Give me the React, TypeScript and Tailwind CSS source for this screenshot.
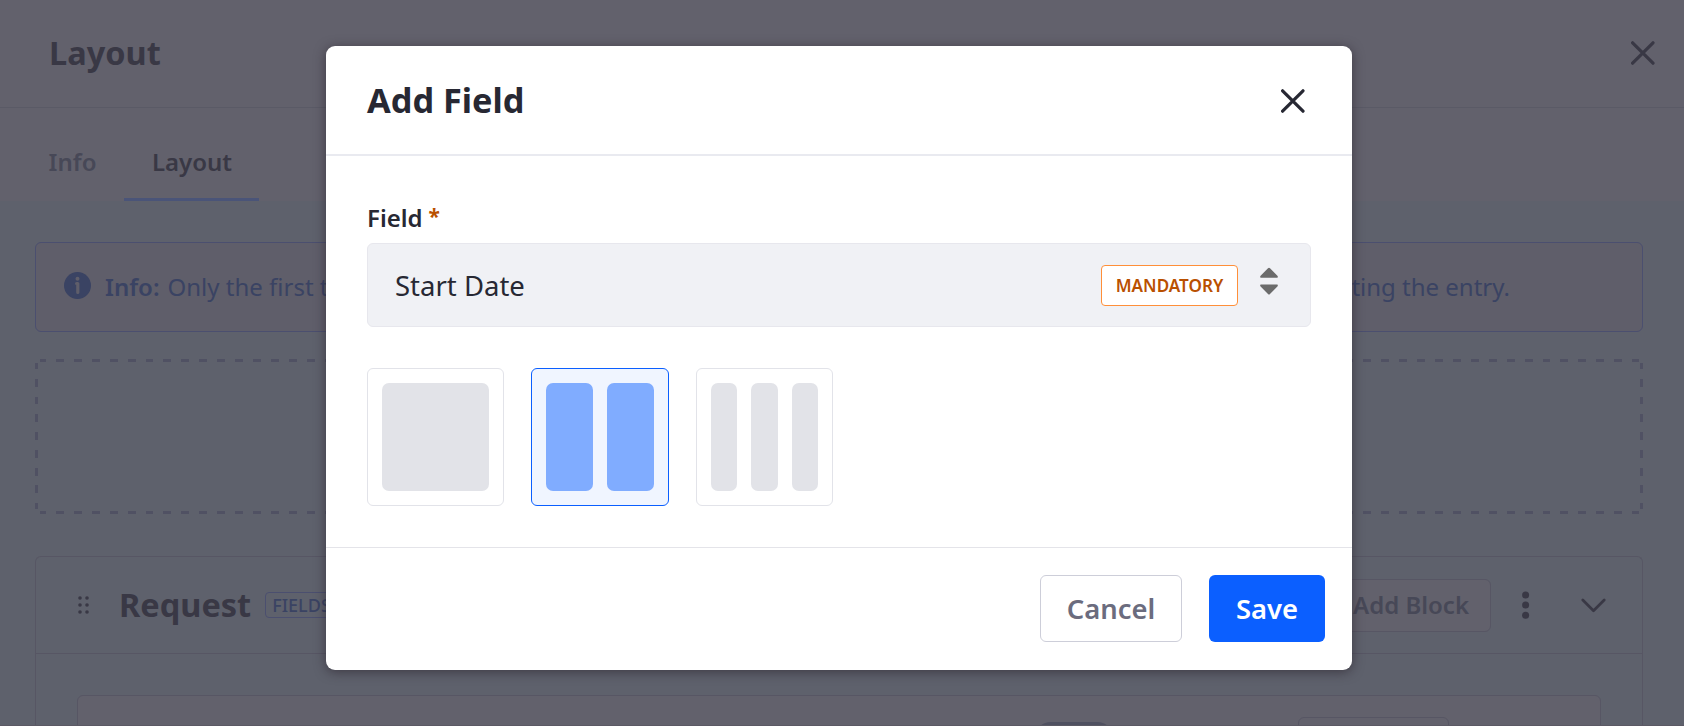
import React from "react";

function Close({ className }: { className?: string }) {
  return (
    <svg className={className} width="24" height="24" viewBox="0 0 24 24" fill="none" stroke="currentColor" strokeWidth="3.2" strokeLinecap="round">
      <path d="M1.6 1.8 22 22.2M22 1.8 1.6 22.2" />
    </svg>
  );
}

function DropZone() {
  const across = "repeating-linear-gradient(90deg,#505163 0 6px,transparent 6px 16px,#505163 16px 17.91px)";
  const down = "repeating-linear-gradient(180deg,#505163 0 6px,transparent 6px 16px,#505163 16px 17.75px)";
  return (
    <div
      className="mt-[27px] h-[155px] bg-no-repeat"
      style={{
        backgroundImage: [across, across, down, down].join(","),
        backgroundSize: "calc(100% - 9px) 3px,calc(100% - 9px) 3px,3px 146px,3px 146px",
        backgroundPosition: "5px 0,5px 100%,0 4px,100% 4px",
      }}
    />
  );
}

function Page() {
  return (
    <div className="flex h-full flex-col bg-[#5e616c]">
      <header className="flex h-[108px] shrink-0 items-center justify-between border-b border-[#5a5a66] bg-[#62616c] pr-[29px] pb-[2px] pl-[49px] text-[#393845]">
        <h1 className="pt-[2px] text-[32.5px] font-bold">Layout</h1>
        <Close />
      </header>
      <nav className="flex h-[93px] shrink-0 bg-[#62616c] pl-[20px] text-[24px] font-semibold">
        <div className="flex w-[105px] items-center justify-center pt-[15px] text-[#474857]">Info</div>
        <div className="-ml-px flex w-[135px] items-center justify-center border-b-[3px] border-[#4a5478] pt-[18px] pl-[1px] text-[#393845]">Layout</div>
      </nav>
      <main className="flex grow flex-col pt-[41px] pr-[41px] pl-[35px]">
        <div className="flex h-[90px] shrink-0 items-center rounded-[6px] border border-[#4b4f6f] bg-[#5f5e6a] pl-[28px] text-[24px] text-[#3a4363]">
          <svg width="27" height="27" viewBox="0 0 27 27" className="mr-[14px] mb-[3px] shrink-0">
            <circle cx="13.5" cy="13.5" r="13.5" fill="currentColor" />
            <circle cx="13.5" cy="6.8" r="2" fill="#5f5e6a" />
            <path d="M12.6 11.5h1.2v9" fill="none" stroke="#5f5e6a" strokeWidth="3.2" strokeLinecap="round" strokeLinejoin="round" />
          </svg>
          <b className="mr-[8px] font-semibold">Info:</b>
          <span className="grow">Only the first t</span>
          <span className="mr-[132px]">ting the entry.</span>
        </div>
        <DropZone />
        <section className="mt-[42px] grow rounded-t-[6px] border border-b-0 border-[#575664]">
          <div className="flex h-[97px] items-center border-b border-[#575664] pl-[42px] text-[#393845]">
            <svg width="11" height="18" viewBox="0 0 11 18" fill="currentColor">
              {[2, 9].map((x) => [2, 9, 16].map((y) => <circle key={`${x}-${y}`} cx={x} cy={y} r="1.8" />))}
            </svg>
            <h2 className="ml-[30px] text-[32.5px] font-bold">Request</h2>
            <span className="ml-[14px] flex h-[26px] items-center rounded-[4px] border border-[#4b4f6f] px-[6px] text-[18px] font-medium text-[#3a4363]">FIELDS</span>
            <span className="ml-auto flex h-[53px] items-center rounded-[6px] border border-[#575664] bg-[#62616c] px-[21px] text-[24px] font-semibold text-[#474857]">Add Block</span>
            <svg className="ml-[31px]" width="8" height="28" viewBox="0 0 8 28" fill="currentColor">
              <circle cx="3.6" cy="4" r="3.5" />
              <circle cx="3.6" cy="14" r="3.5" />
              <circle cx="3.6" cy="24.3" r="3.5" />
            </svg>
            <svg className="mr-[36px] ml-[51px]" width="25" height="15" viewBox="0 0 25 15" fill="none" stroke="currentColor" strokeWidth="2.7" strokeLinecap="round" strokeLinejoin="round">
              <path d="M1.8 2 12.5 12.8 23.2 2" />
            </svg>
          </div>
          <div className="mt-[41px] mr-[41px] ml-[41px] flex h-[80px] items-start justify-end rounded-[6px] border border-[#575664] bg-[#62616c] pt-[21px]">
            <div className="mt-[5px] mr-[184px] h-[34px] w-[80px] rounded-full bg-[#4f5060]" />
            <div className="mr-[151px] h-[50px] w-[151px] rounded-[6px] border border-[#575664]" />
          </div>
        </section>
      </main>
    </div>
  );
}

function Option({ bars, active }: { bars: number; active?: boolean }) {
  return (
    <div className={`flex h-[138px] gap-[14px] rounded-[6px] border p-[14px] ${active ? "w-[138px] border-[#0b5fff] bg-[#f0f5ff]" : "w-[137px] border-[#e2e3e9]"}`}>
      {Array.from({ length: bars }, (_, i) => (
        <div key={i} className={`grow rounded-[7px] ${active ? "bg-[#80acff]" : "bg-[#e2e3e8]"}`} />
      ))}
    </div>
  );
}

function Modal() {
  return (
    <div className="flex h-[624px] w-[1026px] flex-col rounded-[9px] bg-white text-[#272833] shadow-[0_2px_12px_rgba(39,30,40,0.6)]">
      <div className="flex h-[110px] items-center justify-between border-b-2 border-[#e9eaf0] pr-[47px] pl-[41px]">
        <h2 className="text-[34.3px] font-bold">Add Field</h2>
        <Close className="mt-[1px]" />
      </div>
      <div className="flex grow flex-col px-[41px] pt-[45px]">
        <div className="flex h-[42px] items-center gap-[6px] pb-[8px] text-[24px] font-semibold">
          <span>Field</span>
          <span className="pb-[3px] text-[21px] font-bold text-[#b95000]">*</span>
        </div>
        <div className="flex h-[84px] items-center rounded-[6px] border border-[#e7e7ed] bg-[#f0f1f5] pr-[32px] pl-[27px]">
          <span className="grow pt-[1px] text-[27.5px]">Start Date</span>
          <span className="flex h-[41px] w-[137px] items-center justify-center rounded-[4px] border border-[#ff8f39] bg-white pt-[2px] text-[17.1px] font-semibold text-[#b95000]">MANDATORY</span>
          <svg className="mb-[8px] ml-[22px]" width="18" height="28" viewBox="0 0 18 28" fill="#6b6b6b">
            <path d="M.6 10.8Q-.3 9.7.6 8.7L8 1.3Q9 .3 10 1.3l7.4 7.4q.9 1 0 2.1ZM.6 17.4h16.8q.9 1 0 2L10 26.9q-1 1-2 0L.6 19.4q-.9-1 0-2Z" />
          </svg>
        </div>
        <div className="mt-[41px] flex gap-[27px]">
          <Option bars={1} />
          <Option bars={2} active />
          <Option bars={3} />
        </div>
      </div>
      <div className="flex h-[123px] items-center justify-end gap-[27px] border-t border-[#e4e4e9] px-[27px] pb-[2px] text-[27.4px] font-semibold">
        <button className="h-[67px] w-[142px] rounded-[6px] border border-[#cdced9] pt-[1px] text-[#6b6c7e]">Cancel</button>
        <button className="h-[67px] w-[116px] rounded-[6px] bg-[#0b5fff] pt-[1px] text-white">Save</button>
      </div>
    </div>
  );
}

export default function App() {
  return (
    <div className="relative h-[726px] w-[1684px] overflow-hidden border-b border-[#5b5964] font-['Noto_Sans',sans-serif]">
      <Page />
      <div className="absolute inset-0 flex items-start pt-[46px] pl-[326px]">
        <Modal />
      </div>
    </div>
  );
}
